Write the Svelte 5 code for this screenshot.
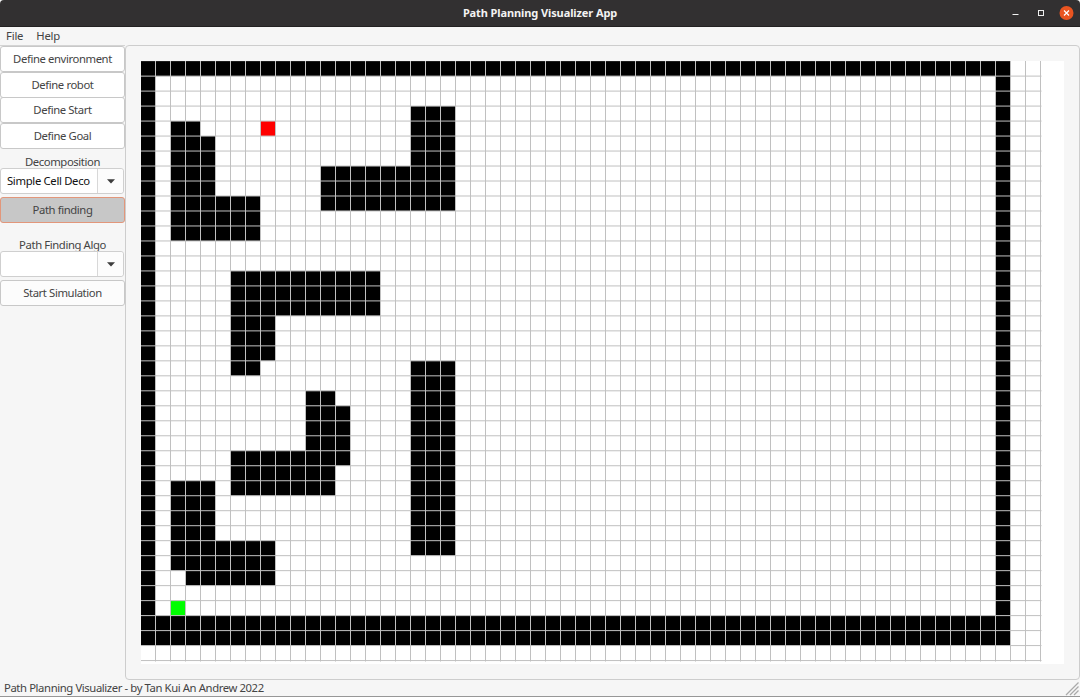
<script>
  const buttons = ['Define environment', 'Define robot', 'Define Start', 'Define Goal'];
  const CW = 15;
  const CH = 14.986;
  const Y0 = 0.12;
  // obstacle blocks: [column, row, columns, rows]
  const blocks = [
    [0, 0, 58, 1], [0, 1, 1, 36], [57, 1, 1, 36], [0, 37, 58, 2],
    [2, 4, 2, 1], [2, 5, 3, 4], [2, 9, 6, 3],
    [18, 3, 3, 4], [12, 7, 9, 3],
    [6, 14, 10, 3], [6, 17, 3, 3], [6, 20, 2, 1],
    [11, 22, 2, 1], [11, 23, 3, 3], [6, 26, 8, 1], [6, 27, 7, 2],
    [2, 28, 3, 4], [2, 32, 7, 2], [3, 34, 6, 1],
    [18, 20, 3, 13]
  ];
  const rects = [
    ...blocks.map((b) => [...b, '#000']),
    [8, 4, 1, 1, '#f00'],
    [2, 36, 1, 1, '#0f0']
  ];
  const cols = Array.from({ length: 60 }, (_, i) => i + 1);
  const rows = Array.from({ length: 40 }, (_, i) => i + 1);
  const top = (r) => Y0 + r * CH;
</script>

<div class="window">
  <header>
    <span class="title">Path Planning Visualizer App</span>
    <svg class="controls" width="80" height="27" viewBox="0 0 80 27">
      <path d="M12.5 14.5h6" stroke="#f2f2f2" />
      <rect x="38.5" y="10.5" width="5" height="5" fill="none" stroke="#eee" />
      <circle cx="66.5" cy="13" r="7" fill="#e95420" />
      <path d="M64 10.5l5 5M69 10.5l-5 5" stroke="#fff" stroke-width="1.2" />
    </svg>
  </header>
  <nav><span class="file">File</span><span class="help">Help</span></nav>
  <div class="body">
    <aside>
      {#each buttons as b}
        <button class="btn"><span>{b}</span></button>
      {/each}
      <div class="label deco"><span>Decomposition</span></div>
      <div class="combo">
        <span class="value">Simple Cell Deco</span>
        <span class="arrow"><svg width="8" height="5" viewBox="0 0 8 5"><path d="M0 .3h8L4 4.6z" fill="#3d3d3d" /></svg></span>
      </div>
      <button class="btn active"><span>Path finding</span></button>
      <div class="label algo"><span>Path Finding Algo</span></div>
      <div class="combo">
        <span class="value"></span>
        <span class="arrow"><svg width="8" height="5" viewBox="0 0 8 5"><path d="M0 .3h8L4 4.6z" fill="#3d3d3d" /></svg></span>
      </div>
      <button class="btn start"><span>Start Simulation</span></button>
    </aside>
    <main>
      <svg class="grid" width="923" height="603" viewBox="0 0 923 603">
        <rect width="923" height="603" fill="#fff" />
        {#each rects as [c, r, w, h, fill]}
          <rect x={Math.max(0, c * CW - 0.5)} y={Math.max(0, top(r))} width={c === 0 ? w * CW - 0.5 : w * CW} height={h * CH} {fill} />
        {/each}
        {#each cols as c}
          <rect x={c * CW - 1} y="0" width="1" height="600.5" fill="#c0c0c0" />
        {/each}
        {#each rows as r}
          <rect x="0" y={top(r) - 0.5} width="900.5" height="1" fill="#c0c0c0" />
        {/each}
      </svg>
    </main>
  </div>
  <footer>
    <span class="status">Path Planning Visualizer - by Tan Kui An Andrew 2022</span>
    <svg class="grip" width="15" height="15" viewBox="0 0 15 15">
      <path d="M1 14L13.5 1.5M5 14l8.5-8.5M9 14l4.5-4.5" stroke="#aaa" stroke-width="1.3" />
    </svg>
  </footer>
</div>

<style>
  :global(body) { margin: 0; background: #2c2a2b; }
  .window {
    width: 1080px; height: 697px; display: flex; flex-direction: column; box-sizing: border-box;
    background: #f6f6f6; border-bottom: 1px solid #979797; overflow: hidden;
    font: 11.3px/14px "Noto Sans", "Open Sans", sans-serif; letter-spacing: -0.4px; color: #444;
  }
  header {
    height: 27px; flex: none; box-sizing: border-box; display: grid; grid-template-columns: 80px 1fr 80px;
    align-items: center; background: #323031; border-bottom: 1px solid #232122;
    border-radius: 4px 4px 0 0;
  }
  .title { grid-column: 2; text-align: center; color: #f3f3f3; font-weight: 700; font-size: 11px; letter-spacing: -0.1px; padding-bottom: 2px; }
  nav { height: 18px; flex: none; display: flex; gap: 13px; padding: 0 6px; line-height: 18px; box-sizing: border-box; letter-spacing: -0.2px; }
  .body { height: 635px; flex: none; display: flex; }
  aside { width: 125px; flex: none; display: flex; flex-direction: column; box-sizing: border-box; border-top: 1px solid #d4d4d4; }
  .btn {
    height: 26px; flex: none; margin: 0 0 -0.5px; padding: 0; width: 125px; border: 1px solid #c8c8c8; border-radius: 3px;
    background: #fff; color: inherit; font: inherit; letter-spacing: inherit; white-space: nowrap;
  }
  .btn.active { margin: 3px 0 0; background: #c7c7c7; border-color: #e2967a; }
  .btn.start { margin-top: 3px; background: #fcfcfc; }
  .label { height: 20px; flex: none; text-align: center; line-height: 28px; box-sizing: border-box; white-space: nowrap; }
  .label.algo { height: 28px; line-height: 44px; }
  .combo { height: 26px; flex: none; width: 124px; display: flex; border: 1px solid #cfcfcf; border-radius: 3px; background: #fff; box-sizing: border-box; }
  .value { width: 90px; padding-left: 6px; line-height: 24px; color: #111; white-space: nowrap; box-sizing: content-box; letter-spacing: -0.33px; }
  .arrow { flex: 1; border-left: 1px solid #d8d8d8; display: flex; align-items: center; justify-content: center; background: #fcfcfc; border-radius: 0 3px 3px 0; }
  main { flex: 1; box-sizing: border-box; border: 1px solid #cdcdcd; border-radius: 4px; padding: 15px 0 0 15px; }
  .grid { display: block; }
  footer { flex: 1; display: flex; justify-content: space-between; align-items: center; padding-left: 4px; }
  svg { display: block; }
</style>
